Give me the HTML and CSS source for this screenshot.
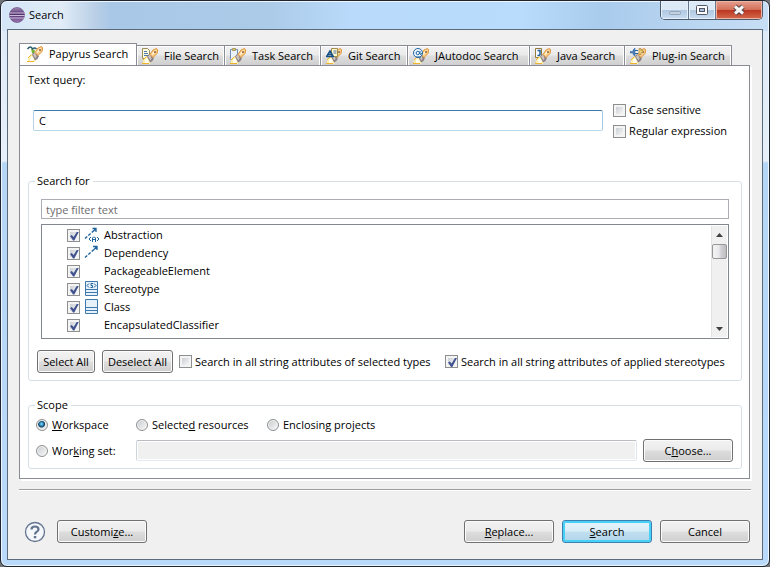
FILE: index.html
```html
<!DOCTYPE html>
<html lang="en">
<head>
<meta charset="utf-8">
<title>Search</title>
<link rel="stylesheet" href="styles.css">
</head>
<body>
<svg class="defs" aria-hidden="true">
  <defs>
    <linearGradient id="orb" x1="0" y1="0" x2="0" y2="1">
      <stop offset="0" stop-color="#a58bb8"/><stop offset=".45" stop-color="#50306e"/><stop offset="1" stop-color="#9a78b2"/>
    </linearGradient>
    <symbol id="torch" viewBox="0 0 16 16">
      <path d="M1 13l3-4h2l3 4-1 3H1z" fill="#fdf0a6"/>
      <path d="M3 12l2-2 2 3-1 3H3z" fill="#fffef4"/>
      <path d="M0 15.500h7M4.500 8.500L1 12" stroke="#f0b030" fill="none"/>
      <path d="M5 8.500l2-2.500 5 4-1.500 3L8 14.500z" fill="#8b8084"/>
      <path d="M6 8.500l2-2 1.500 4-1 2z" fill="#cfc6c4"/>
      <path d="M8 6.500l3-4.500 3.500-1.500 1.200 1.500-.7 3.500-4 4z" fill="#f9cd8c" stroke="#dd9538"/>
      <path d="M10 6.500L13.500 2.500" stroke="#fff0cf" stroke-width="1.500"/>
      <circle cx="13" cy="4" r=".9" fill="#7d5530"/>
    </symbol>
  </defs>
</svg>
<div class="window">
  <header class="titlebar">
    <svg class="app-icon" viewBox="0 0 16 16" aria-hidden="true">
      <circle cx="8" cy="8" r="7.500" fill="url(#orb)" stroke="#6b4c83" stroke-width=".7"/>
      <path d="M1 6h14M.5 8.500h15M1 11h14" stroke="#d9cbe3" stroke-width=".9"/>
    </svg>
    <h1 class="title">Search</h1>
    <div class="caption">
      <button class="cap" type="button" aria-label="Minimize"><svg viewBox="0 0 16 12"><rect x="2.500" y="7.500" width="11" height="3" rx="1" fill="#c3d2e2" stroke="#94a5b8"/></svg></button>
      <button class="cap cap-max" type="button" aria-label="Maximize"><svg viewBox="0 0 16 12"><rect x="2.500" y="1.500" width="11" height="9" rx="1" fill="#fff" stroke="#505867"/><rect x="5.500" y="4.500" width="5" height="3" fill="#a9bed5" stroke="#505867"/></svg></button>
      <button class="cap cap-close" type="button" aria-label="Close"><svg viewBox="0 0 16 12"><path d="M4 2.500l8 7M12 2.500l-8 7" stroke="#5b4048" stroke-width="5"/><path d="M4 2.500l8 7M12 2.500l-8 7" stroke="#f6f6f6" stroke-width="3"/></svg></button>
    </div>
  </header>
  <main class="client">
    <div class="tabs" role="tablist">
      <button class="tab active" role="tab" aria-selected="true" type="button"><svg viewBox="0 0 16 16"><path d="M4 3l4 1-1 5-2-2z" fill="#74b72e"/><path d="M.5 3q3-4 5 0 2-2 4 0" stroke="#2f5f6e" fill="none" stroke-width="1.500"/><use href="#torch"/></svg>Papyrus Search</button>
      <button class="tab" role="tab" type="button"><svg viewBox="0 0 16 16"><path d="M.5.500h5l2 2v8h-7z" fill="#fffbe0" stroke="#998c59"/><path d="M2 3.500h3M2 5.500h4M2 7.500h4" stroke="#4a76ae"/><use href="#torch"/></svg>File Search</button>
      <button class="tab" role="tab" type="button"><svg viewBox="0 0 16 16"><path d="M.5 1.500h7v10h-7z" fill="#eaf3fd" stroke="#7190b4"/><path d="M2.500.5h3v2h-3z" fill="#dac88b" stroke="#ab9756"/><use href="#torch"/></svg>Task Search</button>
      <button class="tab" role="tab" type="button"><svg viewBox="0 0 16 16"><use href="#torch"/><path d="M5.500.5h6v8h-6z" fill="#fff9d2" stroke="#a28e49"/><path d="M7.500 3h3M7.500 5h3" stroke="#486d9f"/><path d="M0 8.500h8M1 8l3-5 3 5M2 6.500h4" fill="none" stroke="#174f87" stroke-width="1.500"/></svg>Git Search</button>
      <button class="tab" role="tab" type="button"><svg viewBox="0 0 16 16"><use href="#torch"/><circle cx="5" cy="5" r="4.500" fill="#edf6ff" stroke="#2467a1"/><circle cx="4.800" cy="5" r="1.700" fill="none" stroke="#2467a1"/><path d="M7 3v3q1 1.500 2-1M3 9h5" fill="none" stroke="#2467a1"/></svg>JAutodoc Search</button>
      <button class="tab" role="tab" type="button"><svg viewBox="0 0 16 16"><path d="M.5.500h6v9h-6z" fill="#f8fbff" stroke="#947b39"/><path d="M2.500 2.500H5v4q-.5 1.500-2.500.8" fill="none" stroke="#22639d" stroke-width="1.500"/><use href="#torch"/></svg>Java Search</button>
      <button class="tab" role="tab" type="button"><svg viewBox="0 0 16 16"><use href="#torch"/><path d="M0 3.500h3V2l2-2v8L3 6.500V5H0z" fill="#4d83bd" stroke="#28619b" stroke-width=".5"/><path d="M5 2.500h3M5 5.500h3" stroke="#28619b"/><path d="M9 .5h2v2h2v2h-2v2H9z" fill="#f0d482" stroke="#a98536" stroke-width=".7"/></svg>Plug-in Search</button>
    </div>
    <section class="panel" role="tabpanel">
      <div class="query">
        <label class="query-label" for="q">Text query:</label>
        <div class="query-row">
          <input class="text focus" id="q" type="text" value="C">
          <div class="options">
            <label class="check"><input type="checkbox">Case sensitive</label>
            <label class="check"><input type="checkbox">Regular expression</label>
          </div>
        </div>
      </div>
      <fieldset class="group types">
        <legend>Search for</legend>
        <input class="text filter" type="text" placeholder="type filter text" aria-label="type filter text">
        <div class="list">
          <ul class="items">
            <li><label class="item"><input type="checkbox" checked><svg viewBox="0 0 15 16"><path d="M1 11.500L10.500 3" stroke="#1e639e" stroke-width="1.400" stroke-dasharray="3 1.500"/><path d="M8.500 1.500H12V5M12 1.500L9.500 4" stroke="#1e639e" fill="none" stroke-width="1.300"/><path d="M7 10l-2 2 2 2M13 10l2 2-2 2M8.500 15v-4l1-1h1l1 1v4M8.500 12.500h3" stroke="#1e639e" fill="none"/></svg>Abstraction</label></li>
            <li><label class="item"><input type="checkbox" checked><svg viewBox="0 0 15 16"><path d="M1 12.500L10.500 4" stroke="#1e639e" stroke-width="1.400" stroke-dasharray="3 1.500"/><path d="M9 1.500h4V5M13 1.500L10 4.500" stroke="#1e639e" fill="none" stroke-width="1.300"/></svg>Dependency</label></li>
            <li><label class="item"><input type="checkbox" checked><svg viewBox="0 0 15 16"></svg>PackageableElement</label></li>
            <li><label class="item"><input type="checkbox" checked><svg viewBox="0 0 15 16"><path d="M1.500.500h12v14h-12z" fill="#e7f1fa" stroke="#3d79ad"/><path d="M1 8.500h13M1 11.500h13" stroke="#3d79ad"/><path d="M5 2.500l-2 2 2 2M10 2.500l2 2-2 2M9 2.500H7v2h1.500v2h-2" stroke="#1e639e" fill="none"/></svg>Stereotype</label></li>
            <li><label class="item"><input type="checkbox" checked><svg viewBox="0 0 15 16"><path d="M1.500.500h12v14h-12z" fill="#e7f1fa" stroke="#3d79ad"/><path d="M1 8.500h13M1 11.500h13" stroke="#3d79ad"/></svg>Class</label></li>
            <li><label class="item"><input type="checkbox" checked><svg viewBox="0 0 15 16"></svg>EncapsulatedClassifier</label></li>
          </ul>
          <div class="scroll" aria-hidden="true">
            <span class="arrow up"></span><span class="thumb"></span><span class="arrow down"></span>
          </div>
        </div>
        <div class="type-actions">
          <button class="btn small" type="button">Select All</button>
          <button class="btn small wide" type="button">Deselect All</button>
          <label class="check selected-types"><input type="checkbox">Search in all string attributes of selected types</label>
          <label class="check"><input type="checkbox" checked>Search in all string attributes of applied stereotypes</label>
        </div>
      </fieldset>
      <fieldset class="group scope">
        <legend>Scope</legend>
        <div class="scope-grid">
          <label class="radio"><input type="radio" name="scope" checked><span><u>W</u>orkspace</span></label>
          <div class="scope-more">
            <label class="radio"><input type="radio" name="scope"><span>Selecte<u>d</u> resources</span></label>
            <label class="radio"><input type="radio" name="scope"><span>Enclosing projects</span></label>
          </div>
          <label class="radio"><input type="radio" name="scope"><span>Wor<u>k</u>ing set:</span></label>
          <div class="set-row">
            <input class="text set" type="text" disabled aria-label="Working set">
            <button class="btn" type="button">C<u>h</u>oose...</button>
          </div>
        </div>
      </fieldset>
    </section>
    <footer class="footer">
      <button class="help" type="button" aria-label="Help"><svg viewBox="0 0 22 22"><circle cx="11" cy="11" r="9.500" fill="#f5f7fb" stroke="#62748f" stroke-width="1.300"/><path d="M7.500 8.500Q7.500 5.500 11 5.500t3.500 2.700Q14.500 10 12.500 11 11 11.800 11 13.500" fill="none" stroke="#62748f" stroke-width="2.200"/><path d="M9.800 15h2.500v2.300H9.800z" fill="#62748f"/></svg></button>
      <button class="btn" type="button">Customi<u>z</u>e...</button>
      <span class="spacer"></span>
      <button class="btn" type="button"><u>R</u>eplace...</button>
      <button class="btn default" type="button"><u>S</u>earch</button>
      <button class="btn" type="button">Cancel</button>
    </footer>
  </main>
</div>
</body>
</html>
```
FILE: styles.css
```css
* { box-sizing: border-box; }
body {
  margin: 0;
  background: #6f7377;
  color: #000;
  font: 11px/16px "Open Sans", "Noto Sans", sans-serif;
  white-space: nowrap;
}
button, input { font: inherit; color: inherit; margin: 0; }
button { padding: 0; }
.defs { position: absolute; width: 0; height: 0; }

.window {
  min-height: 100vh;
  display: flex;
  flex-direction: column;
  padding: 0 6px 6px;
  border: 1px solid #20242e;
  border-radius: 7px;
  background:
    linear-gradient(90deg, #d3e5f7 0, #e1ecf7 60px, #b9cfe6 95px, #a9c8e7 110px, #accbe9 270px, #b9dafa 350px, #b9dcfc 520px, #a9cbec 600px, #c7def5 100%) 0 0 / 100% 30px no-repeat,
    linear-gradient(#dce9f6 0, #e7f0fa 160px, #b6d6f6 162px, #b9dafa 100%);
  box-shadow: inset 0 0 0 1px #edf6ff;
}
.titlebar { display: flex; height: 28px; padding-left: 2px; }
.app-icon { width: 16px; height: 16px; margin-top: 6px; }
.title { flex: 1; margin: 5px 0 0 4px; font-size: 11px; font-weight: 400; line-height: 18px; }
.caption {
  display: flex;
  height: 19px;
  border: 1px solid #4e5b6d;
  border-top: 0;
  border-radius: 0 0 5px 5px;
  overflow: hidden;
}
.cap {
  width: 28px;
  border: 0;
  border-right: 1px solid #66788f;
  background: linear-gradient(#dce9f6 0 48%, #b0c8e1 52%, #c9def3);
  box-shadow: inset 0 0 0 1px #e6f1fb;
}
.cap-max { width: 27px; }
.cap-close {
  width: 46px;
  border: 0;
  background: linear-gradient(#e4a08f 0, #d3705a 48%, #bb3722 52%, #d56a4c);
  box-shadow: inset 0 0 0 1px #eeb5a5;
}
.cap svg { display: block; width: 16px; height: 12px; margin: 0 auto; }

.client {
  flex: 1;
  display: flex;
  flex-direction: column;
  padding: 13px 11px 16px;
  border: 1px solid #5c6b7c;
  background: #f0f0f0;
}
.tabs {
  display: grid;
  grid-template-columns: 118px 88px 96px 87px 122px 95px 107px;
  align-items: end;
  margin-bottom: -1px;
}
.tab {
  display: flex;
  align-items: center;
  gap: 6px;
  height: 21px;
  padding: 0 0 0 5px;
  border: 1px solid #898c95;
  border-left-width: 0;
  background: linear-gradient(#f2f2f2, #ebebeb 45%, #dddddd 55%, #cfcfcf);
  box-shadow: inset 1px 1px 0 #fff, inset -1px 0 0 #fff;
}
.tab svg { width: 16px; height: 16px; flex: none; }
.tab.active {
  height: 23px;
  padding: 0 0 1px 7px;
  border-left-width: 1px;
  border-bottom-color: #fff;
  background: #fff;
}
.panel {
  flex: 1;
  display: flex;
  flex-direction: column;
  margin-right: 1px;
  padding: 6px 7px 8px 8px;
  border: 1px solid #898c95;
  box-shadow: 2px 2px 0 #fff;
  background: #fff;
}
.query-row { display: flex; align-items: center; gap: 10px; padding: 14px 15px 0 5px; }
.options { display: flex; flex-direction: column; gap: 5px; }
.text {
  flex: 1;
  min-width: 0;
  width: 100%;
  height: 21px;
  padding: 0 5px;
  border: 1px solid #abadb3;
  background: #fff;
  outline: 0;
}
.focus { border-color: #3d7bad #a4c9e3 #b7d9ed #b5cfe7; border-radius: 2px; }
.filter { flex: none; height: 20px; padding: 0 4px; }
.filter::placeholder { color: #6d6d6d; opacity: 1; }

.check, .item, .radio { display: flex; align-items: center; }
.check { gap: 3px; }
.radio { gap: 4px; }
input[type="checkbox"] {
  appearance: none;
  flex: none;
  display: grid;
  place-items: center;
  width: 13px;
  height: 13px;
  border: 1px solid #8e8f8f;
  background: linear-gradient(135deg, #cbcfd5, #f6f6f6) content-box, #f4f4f4;
  padding: 2px;
}
input[type="checkbox"]:checked::before {
  content: "";
  width: 9px;
  height: 9px;
  background: #41548f;
  clip-path: polygon(0 50%, 20% 38%, 40% 62%, 78% 0, 100% 0, 48% 100%, 34% 100%);
}
input[type="radio"] {
  appearance: none;
  flex: none;
  width: 12px;
  height: 12px;
  border: 1px solid #8e8f8f;
  border-radius: 50%;
  background: linear-gradient(135deg, #c6cace, #fafafa);
  box-shadow: inset 0 0 0 1px #f4f4f4;
}
input[type="radio"]:checked {
  background: radial-gradient(circle at 45% 40%, #8fdcf6 0, #2585b5 2px, #113a58 3px, #dfe3e6 4px);
}

.group {
  min-width: 0;
  margin: 0;
  padding: 0 12px;
  border: 1px solid #d5dfe5;
  border-radius: 3px;
}
.group legend { margin-left: -6px; padding: 0 3px 0 2px; }
.types { margin-top: 34px; }
.types .filter { display: block; margin-top: 10px; }
.list {
  display: flex;
  height: 115px;
  margin-top: 5px;
  border: 1px solid #828790;
  background: #fff;
}
.items { flex: 1; margin: 0; padding: 1px 0 0 25px; list-style: none; }
.item { height: 18px; }
.item svg { width: 15px; height: 16px; margin: 0 5px 0 4px; }
.scroll {
  display: flex;
  flex-direction: column;
  align-items: center;
  width: 16px;
  margin: 1px;
  background: #f0f0f0;
  border-left: 1px solid #e3e3e3;
}
.arrow { width: 7px; height: 4px; background: #404040; }
.up { margin: 7px 0; clip-path: polygon(50% 0, 100% 100%, 0 100%); }
.down { margin: auto 0 6px; clip-path: polygon(0 0, 100% 0, 50% 100%); }
.thumb {
  width: 15px;
  height: 15px;
  border: 1px solid #979797;
  border-radius: 2px;
  background: linear-gradient(90deg, #f4f4f4, #e9e9eb 45%, #d3d3d7 60%, #bcbcc1);
}
.type-actions { display: flex; align-items: center; gap: 6px; margin: 11px -12px 7px -4px; }
.selected-types { width: 260px; }

.btn {
  min-width: 90px;
  height: 23px;
  border: 1px solid #707070;
  border-radius: 3px;
  background: linear-gradient(#f2f2f2, #ebebeb 48%, #dddddd 52%, #cfcfcf);
  box-shadow: inset 0 0 0 1px #fbfbfb;
}
.small { min-width: 58px; }
.wide { min-width: 71px; margin-left: 1px; }
.default {
  border-color: #3c7fb1;
  background: linear-gradient(#e6f3fa, #d9edf7 48%, #c0dff0 52%, #b0d5e8);
  box-shadow: inset 0 0 0 2px #48d1f7;
}

.scope { margin-top: 16px; }
.scope-grid {
  display: grid;
  grid-template-columns: 100px 1fr;
  row-gap: 6px;
  align-items: center;
  margin: 4px -4px 6px -5px;
}
.scope-more { display: grid; grid-template-columns: 131px 1fr; }
.set-row { display: flex; gap: 6px; }
.set-row .text { margin-top: 1px; }
.set { border-color: #b9bcc1 #dfe4ea #e3e9ef #cfd4dc; border-radius: 2px; background: #f0f0f0; box-shadow: inset 0 0 0 1px #fff; }

.footer {
  display: flex;
  align-items: center;
  gap: 8px;
  margin-top: 10px;
  padding: 30px 1px 0 5px;
  border-top: 1px solid #a0a0a0;
  box-shadow: inset 0 1px 0 #fff;
}
.help { width: 22px; height: 22px; margin: 0 3px 0 0; border: 0; background: none; }
.help svg { display: block; width: 22px; height: 22px; }
.spacer { flex: 1; }
```
